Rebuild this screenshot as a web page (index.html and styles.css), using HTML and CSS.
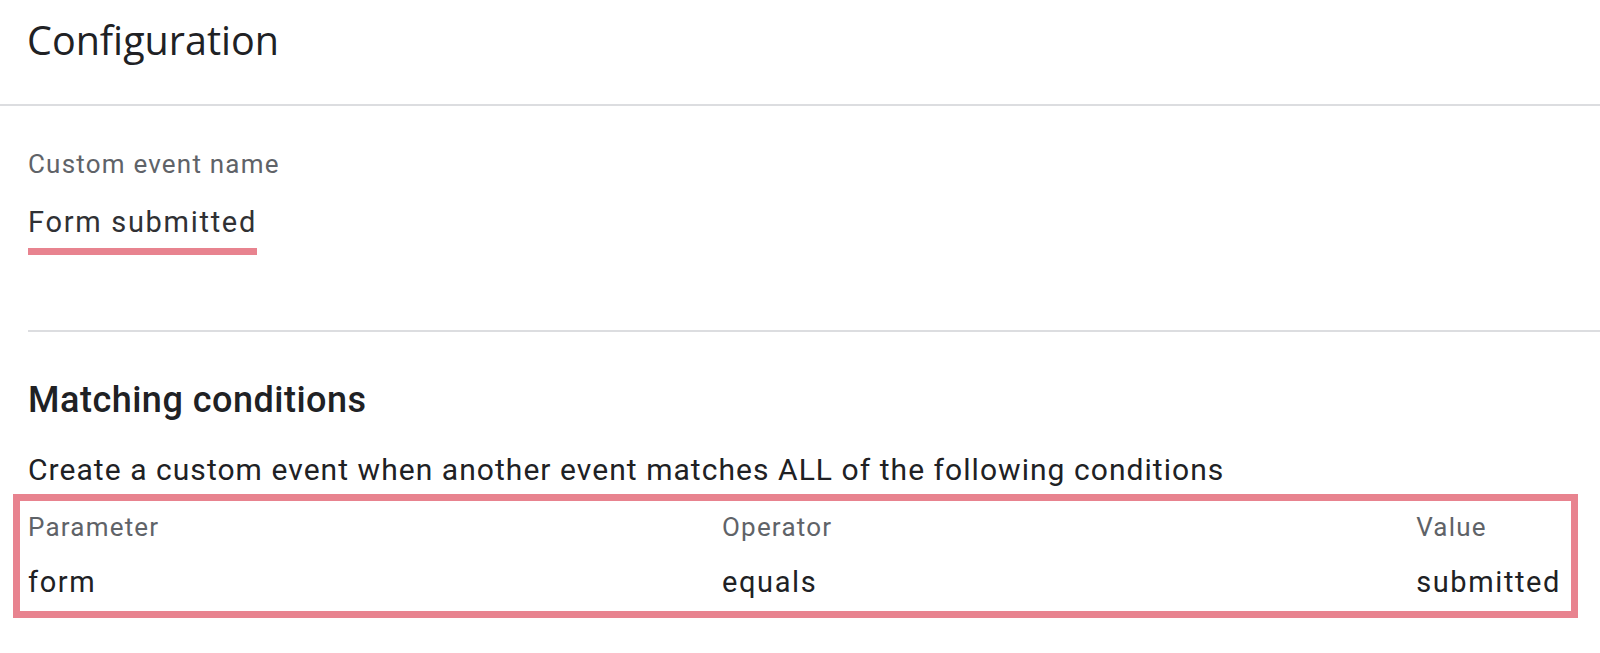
FILE: index.html
```html
<!DOCTYPE html>
<html lang="en">
<head>
<meta charset="utf-8">
<title>Configuration</title>
<link rel="stylesheet" href="styles.css">
</head>
<body>
<div class="page">
  <header class="header">
    <h1 class="title">Configuration</h1>
  </header>
  <section class="name-section">
    <div class="label">Custom event name</div>
    <div class="field"><span class="field-value">Form submitted</span></div>
  </section>
  <section class="match-section">
    <h2 class="subtitle">Matching conditions</h2>
    <p class="desc">Create a custom event when another event matches ALL of the following conditions</p>
    <div class="cond-box">
      <div class="cond-grid">
        <div class="label cell">Parameter</div>
        <div class="label cell">Operator</div>
        <div class="label cell">Value</div>
        <div class="value cell row2">form</div>
        <div class="value cell row2">equals</div>
        <div class="value cell row2">submitted</div>
      </div>
    </div>
  </section>
</div>
</body>
</html>
```

FILE: styles.css
```css
* { box-sizing: border-box; }
html, body { margin: 0; padding: 0; background: #ffffff; }
body { font-family: Roboto, "Liberation Sans", sans-serif; color: #202124; }
.page { width: 1600px; }

.header {
  height: 106px;
  padding: 16px 0 0 27px;
  border-bottom: 2px solid #dcdde0;
}
.title {
  margin: 0;
  font-family: "Open Sans", "Liberation Sans", sans-serif;
  font-weight: 400;
  font-size: 39.5px;
  line-height: 48px;
  color: #202124;
}

.name-section {
  padding: 40px 0 75px 0;
  margin-left: 28px;
  border-bottom: 2px solid #dcdde0;
}
.label {
  font-size: 26px;
  line-height: 36px;
  letter-spacing: 1.2px;
  color: #5f6368;
}
.field { margin-top: 20px; }
.field-value {
  display: inline-block;
  font-size: 29px;
  line-height: 40px;
  letter-spacing: 1.7px;
  color: #303134;
  padding-bottom: 6px;
  border-bottom: 7px solid #e8838f;
}

.match-section { padding-top: 46px; }
.subtitle {
  margin: 0 0 0 28px;
  font-size: 36px;
  font-weight: 500;
  line-height: 44px;
  letter-spacing: 0.5px;
  color: #202124;
}
.desc {
  margin: 30px 0 0 28px;
  font-size: 30px;
  line-height: 36px;
  letter-spacing: 1.05px;
  color: #202124;
}
.cond-box {
  margin: 6px 22px 0 13px;
  border: 7px solid #e8838f;
  padding: 8px 10px 9px 8px;
}
.cond-grid {
  display: grid;
  grid-template-columns: 694px 1fr auto;
  row-gap: 17px;
}
.value {
  font-size: 29px;
  line-height: 40px;
  letter-spacing: 1.6px;
  color: #202124;
}
```
